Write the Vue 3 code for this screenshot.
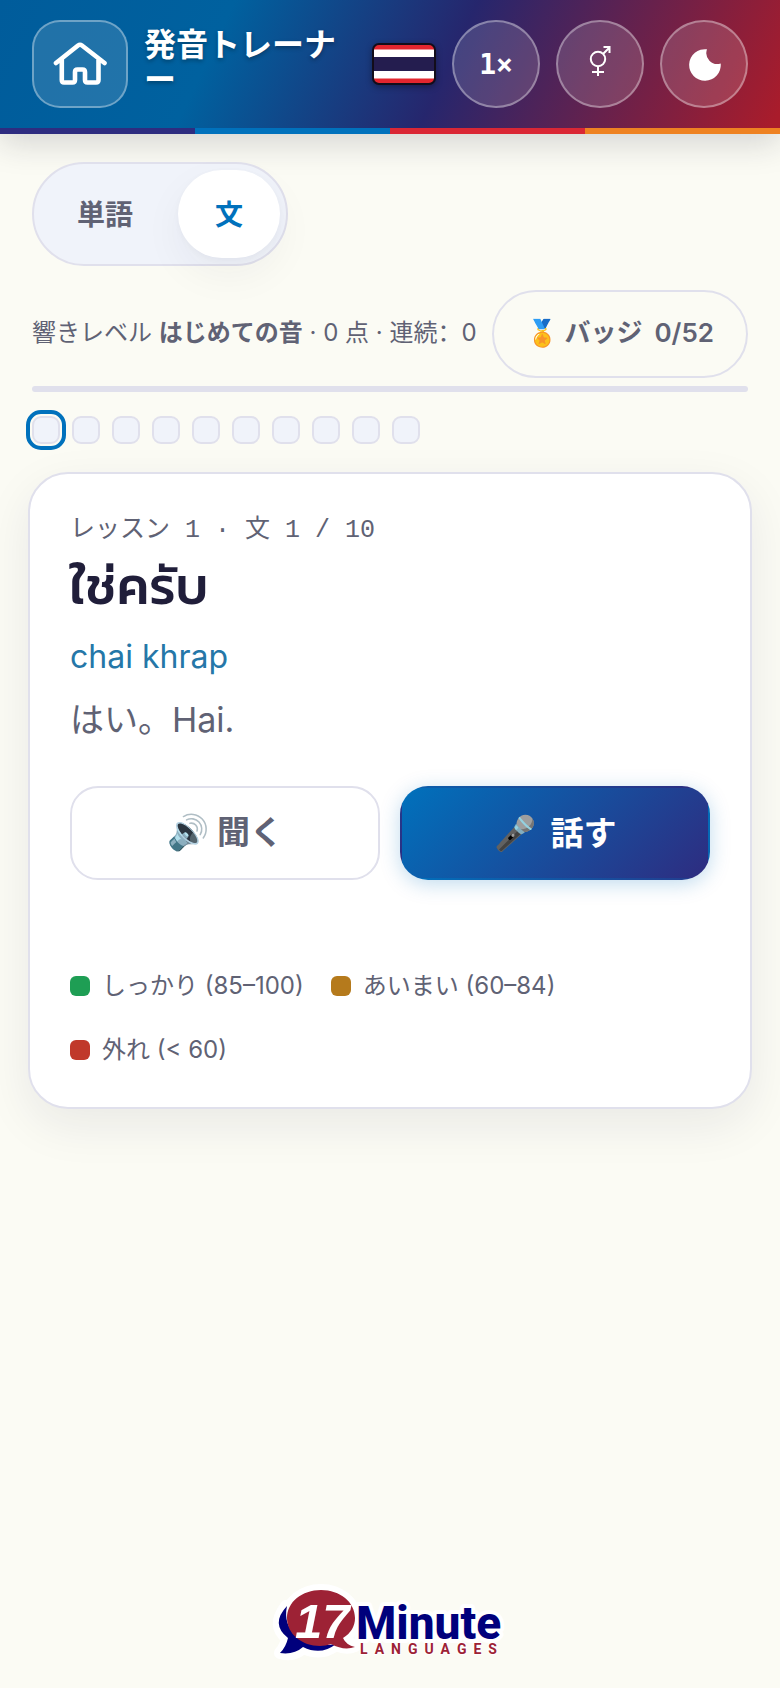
<script setup>
import { ref } from 'vue'

const mode = ref('sentence')
const steps = Array.from({ length: 10 }, (_, i) => i + 1)
const current = ref(1)
const legend = [
  { tone: 'good', label: 'しっかり (85–100)' },
  { tone: 'fair', label: 'あいまい (60–84)' },
  { tone: 'miss', label: '外れ (< 60)' }
]
</script>

<template>
  <div class="page">
    <div class="top">
      <header class="bar">
        <a class="home" href="#" aria-label="ホーム">
          <svg viewBox="0 0 54 44" width="54" height="44" fill="none" stroke="#fff" stroke-width="4.600" stroke-linecap="round" stroke-linejoin="round">
            <path d="M3 21L25 3.500Q27 2 29 3.500L51.500 21M8.800 18V38Q8.800 40.500 11 40.500H19.500Q22 40.500 22 38V30Q22 27.500 24.500 27.500H29.500Q32 27.500 32 30V38Q32 40.500 34.500 40.500H43Q45.500 40.500 45.500 38V18" />
          </svg>
        </a>
        <h1 class="title">発音トレーナー</h1>
        <svg class="flag" viewBox="0 0 64 42" width="64" height="42" role="img" aria-label="タイ">
          <defs><clipPath id="flag-shape"><rect x="1" y="1" width="62" height="40" rx="6" /></clipPath></defs>
          <g clip-path="url(#flag-shape)">
            <rect width="64" height="42" fill="#e3262f" />
            <rect y="6.500" width="64" height="29" fill="#fff" />
            <rect y="14" width="64" height="14" fill="#241d4f" />
          </g>
          <rect x="1" y="1" width="62" height="40" rx="6" fill="none" stroke="#120d1a" stroke-width="2" />
        </svg>
        <button class="round speed" type="button">1×</button>
        <button class="round" type="button" aria-label="声の性別">
          <svg viewBox="0 0 24 38" width="24" height="38" fill="none" stroke="#fff" stroke-width="2">
            <circle cx="10" cy="14" r="7.200" />
            <path d="M10 21.500V31M4 27H16M15 9L21 3M15.500 2H21.500V8" />
          </svg>
        </button>
        <button class="round" type="button" aria-label="ダークモード">
          <svg viewBox="-1 -1 33 33" width="33" height="33" fill="#fff">
            <path d="M18 .3A15.800 15.800 0 1 0 31.700 14.500A11 11 0 0 1 18 .3Z" />
          </svg>
        </button>
      </header>
      <div class="stripes"><i></i><i></i><i></i><i></i></div>
    </div>

    <main class="main">
      <div class="switch">
        <button type="button" :class="{ on: mode === 'word' }" @click="mode = 'word'">単語</button>
        <button type="button" :class="{ on: mode === 'sentence' }" @click="mode = 'sentence'">文</button>
      </div>

      <div class="status">
        <p>響きレベル <b>はじめての音</b> · 0 点 · 連続<span class="colon">：</span>0</p>
        <button class="badges" type="button"><span>🏅 バッジ</span><span>0/52</span></button>
      </div>
      <div class="track"></div>

      <nav class="steps" aria-label="文">
        <button
          v-for="n in steps"
          :key="n"
          type="button"
          :class="{ current: n === current }"
          :aria-label="`文 ${n}`"
          @click="current = n"
        ></button>
      </nav>

      <section class="card">
        <p class="crumb">レッスン 1 · 文 1 / 10</p>
        <h2 class="phrase" lang="th">ใช่ครับ</h2>
        <p class="roman">chai khrap</p>
        <p class="meaning">はい。Hai.</p>
        <div class="actions">
          <button class="listen" type="button"><span class="emoji">🔊</span><span>聞く</span></button>
          <button class="speak" type="button"><span class="emoji">🎤</span><span>話す</span></button>
        </div>
        <ul class="legend">
          <li v-for="item in legend" :key="item.tone"><i :class="item.tone"></i>{{ item.label }}</li>
        </ul>
      </section>
    </main>

    <footer class="foot">
      <svg viewBox="0 0 232 78" width="232" height="78" role="img" aria-label="17 Minute Languages">
        <g stroke="#fff" stroke-width="12" stroke-linejoin="round" fill="#fff">
          <ellipse cx="47" cy="34" rx="34" ry="28" />
          <path d="M12 22Q-3 42 13 54Q12 62 6 69Q20 73 29 64Q48 72 62 61Q72 66 81 62Z" />
        </g>
        <path fill="#00007c" d="M13 22Q-4 40 14 54Q12 63 6 69Q20 71 29 63Q47 72 62 60Q38 64 23 52Q9 41 13 22Z" />
        <text x="82" y="55" class="logo-word">Minute</text>
        <text x="86" y="70" class="logo-sub">LANGUAGES</text>
        <path fill="#9d2235" d="M47 6C66 6 81 18 81 34C81 42 77 49 69 54Q72 61 81 63Q70 67 57 60Q52 62 46 62C28 62 13 50 13 34C13 18 28 6 47 6Z" />
        <text x="21" y="54" class="logo-num">17</text>
      </svg>
    </footer>
  </div>
</template>

<style>
html,
body {
  margin: 0;
  background: #fbfbf4;
}
</style>

<style scoped>
.page {
  min-height: 100vh;
  display: flex;
  flex-direction: column;
  box-sizing: border-box;
  color: #606274;
  font-family: Inter, "Noto Sans CJK JP", sans-serif;
}
.page * {
  box-sizing: border-box;
}
p,
h1,
h2,
ul {
  margin: 0;
  padding: 0;
}
button {
  font: inherit;
  color: inherit;
  padding: 0;
  cursor: pointer;
}
.top {
  box-shadow: 0 8px 32px rgba(30, 30, 50, 0.18);
}
.bar {
  display: flex;
  align-items: center;
  gap: 16px;
  height: 128px;
  padding: 0 32px;
  background: linear-gradient(115deg, #005c9b 0%, #00619f 28%, #26266d 57%, #a91c2b 99%);
}
.home {
  flex: none;
  display: grid;
  place-items: center;
  width: 96px;
  height: 88px;
  border: 2px solid rgba(255, 255, 255, 0.35);
  border-radius: 28px;
  background: rgba(255, 255, 255, 0.13);
}
.title {
  flex: 1;
  min-width: 0;
  color: #fff;
  font-size: 32px;
  line-height: 35px;
  font-weight: 700;
  text-shadow: 0 2px 4px rgba(0, 0, 0, 0.3);
  padding-bottom: 4px;
}
.flag {
  flex: none;
  filter: drop-shadow(0 2px 3px rgba(0, 0, 0, 0.35));
}
.round {
  flex: none;
  display: grid;
  place-items: center;
  width: 88px;
  height: 88px;
  border: 2px solid rgba(255, 255, 255, 0.35);
  border-radius: 50%;
  background: rgba(255, 255, 255, 0.14);
  color: #fff;
}
.speed {
  font-family: "DejaVu Sans Mono", "Liberation Mono", monospace;
  font-size: 28px;
  font-weight: 700;
}
.stripes {
  display: flex;
  height: 6px;
}
.stripes i {
  flex: 1;
  background: #2e2c80;
}
.stripes i:nth-child(2) {
  background: #0071bc;
}
.stripes i:nth-child(3) {
  background: #da2735;
}
.stripes i:nth-child(4) {
  background: #ee8222;
}
.main {
  padding: 28px 28px 0;
}
.switch {
  display: flex;
  width: fit-content;
  gap: 8px;
  margin-left: 4px;
  padding: 6px;
  border: 2px solid #e0e0ec;
  border-radius: 52px;
  background: #f0f3fa;
}
.switch button {
  height: 88px;
  padding: 0 37px 2px;
  border: 0;
  border-radius: 44px;
  background: none;
  font-size: 28px;
  font-weight: 700;
}
.switch .on {
  background: #fff;
  color: #0071bc;
  box-shadow: 0 16px 40px rgba(30, 30, 60, 0.05), 0 2px 6px rgba(30, 30, 60, 0.03);
}
.status {
  display: flex;
  align-items: center;
  justify-content: space-between;
  margin: 24px 4px 8px;
}
.status p {
  padding-bottom: 4px;
  font-size: 24px;
  line-height: 36px;
  white-space: nowrap;
}
.colon {
  font-family: "Noto Sans CJK SC", sans-serif;
}
.badges {
  display: flex;
  align-items: center;
  gap: 12px;
  height: 88px;
  padding: 0 32px 2px;
  border: 2px solid #e0e0ec;
  border-radius: 44px;
  background: none;
  font-size: 26px;
  line-height: 40px;
  font-weight: 600;
  white-space: nowrap;
}
.track {
  height: 6px;
  margin: 0 4px;
  border-radius: 3px;
  background: #e0e0ec;
}
.steps {
  display: flex;
  gap: 12px;
  margin: 24px 4px 28px;
}
.steps button {
  width: 28px;
  height: 28px;
  border: 2px solid #e0e0ec;
  border-radius: 9px;
  background: #f0f3fa;
}
.steps .current {
  outline: 4px solid #0071bc;
  outline-offset: 2px;
}
.card {
  padding: 37px 40px 25px;
  border: 2px solid #e0e0ec;
  border-radius: 40px;
  background: #fff;
  box-shadow: 0 16px 48px rgba(30, 30, 60, 0.08);
}
.crumb {
  font-family: "Liberation Mono", "Noto Sans CJK JP", monospace;
  font-size: 25px;
  line-height: 40px;
}
.phrase {
  color: #201e3a;
  font-family: Kanit, Prompt, "Noto Sans Thai", Inter, sans-serif;
  font-size: 52px;
  line-height: 70px;
  font-weight: 500;
}
.roman {
  margin-top: 12px;
  color: #2577a8;
  font-size: 32px;
  line-height: 48px;
}
.meaning {
  margin-top: 13px;
  font-size: 34px;
  line-height: 52px;
}
.actions {
  display: grid;
  grid-template-columns: 1fr 1fr;
  gap: 20px;
  margin-top: 40px;
}
.actions button {
  display: flex;
  align-items: center;
  justify-content: center;
  gap: 8px;
  height: 94px;
  padding-bottom: 2px;
  border: 2px solid #e0e0ec;
  border-radius: 28px;
  background: #fff;
  font-size: 33px;
  line-height: 48px;
  font-weight: 700;
}
.actions .emoji {
  font-size: 34px;
}
.actions .speak {
  gap: 15px;
  padding-bottom: 0;
  border-color: transparent;
  background: linear-gradient(135deg, #0071bc, #2e2c80);
  color: #fff;
  box-shadow: 0 4px 20px rgba(0, 113, 188, 0.25);
}
.legend {
  display: flex;
  flex-wrap: wrap;
  column-gap: 27px;
  margin-top: 74px;
  list-style: none;
  font-size: 24px;
  line-height: 64px;
}
.legend li {
  display: flex;
  align-items: center;
  gap: 12px;
}
.legend i {
  width: 20px;
  height: 20px;
  border-radius: 6px;
}
.good {
  background: #1e9e54;
}
.fair {
  background: #b57a1c;
}
.miss {
  background: #c0392b;
}
.foot {
  display: flex;
  justify-content: center;
  margin-top: auto;
  padding-bottom: 26px;
}
.foot svg {
  overflow: visible;
}
.logo-num {
  fill: #fff;
  font: italic 700 49px "Liberation Sans", sans-serif;
}
.logo-word,
.logo-sub {
  stroke: #fff;
  stroke-width: 8px;
  stroke-linejoin: round;
  paint-order: stroke;
}
.logo-word {
  fill: #00007c;
  font: 800 46px Roboto, sans-serif;
}
.logo-sub {
  stroke-width: 2px;
  fill: #9d2235;
  font: 700 14px Roboto, sans-serif;
  letter-spacing: 7px;
}
</style>
